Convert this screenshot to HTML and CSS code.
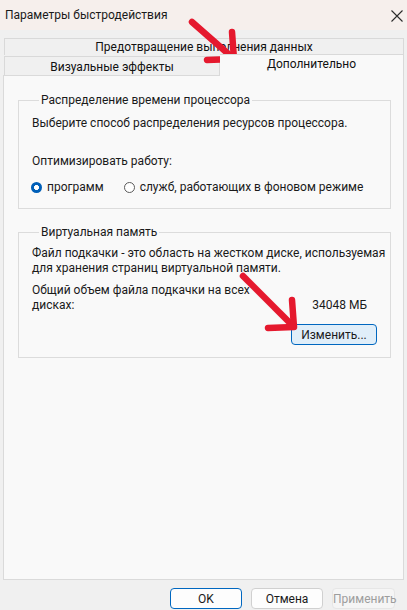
FILE: index.html
```html
<!DOCTYPE html>
<html>
  <head>
    <title>Параметры быстродействия</title>
    <link rel="stylesheet" href="styles.css">
  </head>
  <body>
    <div class="window">
      <div class="titlebar">
        <span>Параметры быстродействия</span>
        <svg class="close" width="12" height="12" viewBox="0 0 12 12">
          <path d="M0.5 0.5 L11.5 11.5 M11.5 0.5 L0.5 11.5" stroke="#2b2b2b" stroke-width="1.1" />
        </svg>
      </div>

      <div class="tabs">
        <div class="tab-row">
          <div class="tab wide">Предотвращение выполнения данных</div>
        </div>
        <div class="tab-row lower">
          <div class="tab left">Визуальные эффекты</div>
          <div class="tab active">Дополнительно</div>
        </div>
      </div>

      <div class="panel">
        <fieldset class="group cpu">
          <legend>Распределение времени процессора</legend>
          <p class="line">Выберите способ распределения ресурсов процессора.</p>
          <p class="line optimize">Оптимизировать работу:</p>
          <div class="radios">
            <label class="radio"><span class="dot checked"></span>программ</label>
            <label class="radio"><span class="dot"></span>служб, работающих в фоновом режиме</label>
          </div>
        </fieldset>

        <fieldset class="group memory">
          <legend>Виртуальная память</legend>
          <p class="line desc">Файл подкачки - это область на жестком диске, используемая для хранения страниц виртуальной памяти.</p>
          <div class="total">
            <span class="total-label">Общий объем файла подкачки на всех дисках:</span>
            <span class="total-value">34048 МБ</span>
          </div>
          <div class="change-row">
            <button class="btn change">Изменить...</button>
          </div>
        </fieldset>
      </div>

      <div class="footer">
        <button class="btn primary">OK</button>
        <button class="btn">Отмена</button>
        <button class="btn disabled">Применить</button>
      </div>

      <!-- annotation arrows -->
      <svg class="arrows" width="407" height="610" viewBox="0 0 407 610">
        <g fill="none" stroke="#e5192e" stroke-width="6.5" stroke-linecap="round" stroke-linejoin="round">
          <path d="M192 22 L233 58" />
          <path d="M232 32 L234 59 L207 60" />
          <path d="M243 276 L293 326" />
          <path d="M292 300 L294 327 L268 328" />
        </g>
      </svg>
    </div>
  </body>
</html>
```

FILE: styles.css
```css
body {
  margin: 0;
  padding: 0;
  font-family: Roboto, "Noto Sans", sans-serif;
  font-size: 12px;
  color: #1a1a1a;
}

.window {
  position: relative;
  width: 407px;
  height: 610px;
  background: #f0f0f0;
  display: flex;
  flex-direction: column;
  overflow: hidden;
}

.titlebar {
  height: 30px;
  flex: none;
  background: #f6efec;
  display: flex;
  align-items: center;
  justify-content: space-between;
  padding: 0 4px 0 5px;
}

.close {
  margin-top: 1px;
}

.tabs {
  padding: 8px 3px 0 4px;
}

.tab-row {
  display: flex;
}

.tab {
  border: 1px solid #d9d9d9;
  background: #f0f0f0;
  text-align: center;
  color: #111;
  line-height: 16px;
}

.tab.wide {
  flex: 1;
  height: 16px;
  line-height: 17px;
  border-bottom: none;
}

.tab-row.lower {
  align-items: flex-end;
}

.tab.left {
  width: 214px;
  height: 18px;
  line-height: 20px;
  border-bottom: none;
}

.tab.active {
  position: relative;
  z-index: 1;
  flex: 1;
  height: 21px;
  margin-top: -1px;
  margin-bottom: -1px;
  border-left: none;
  border-bottom: none;
  background: #f9f9f9;
  line-height: 19px;
}

.panel {
  flex: 1;
  margin: 0 3px 0 3px;
  border: 1px solid #dadada;
  background: #f9f9f9;
  padding: 16px 12px 0 14px;
}

.group {
  margin: 0;
  border: 1px solid #dcdcdc;
  padding: 0 13px 0 13px;
}

.group legend {
  padding: 0 2px;
  margin-left: 7px;
  line-height: 16px;
}

.line {
  margin: 0;
  line-height: 15px;
}

.cpu {
  padding-top: 8px;
  padding-bottom: 13px;
}

.optimize {
  margin-top: 23px;
}

.radios {
  margin-top: 11px;
  display: flex;
  gap: 20px;
  line-height: 15px;
  margin-left: -1px;
}

.radio {
  display: flex;
  align-items: center;
  gap: 5px;
}

.dot {
  width: 9px;
  height: 9px;
  border: 1px solid #5a5a5a;
  border-radius: 50%;
  background: #fff;
}

.dot.checked {
  width: 11px;
  height: 11px;
  border: none;
  background: radial-gradient(circle, #fff 0, #fff 2.2px, #005fb8 2.8px);
}

.memory {
  margin-top: 15px;
  padding-top: 6px;
  padding-bottom: 12px;
}

.desc {
  margin-right: -12px;
}

.total {
  display: flex;
  align-items: flex-end;
  margin-top: 7px;
  line-height: 15px;
}

.total-label {
  width: 222px;
}

.total-value {
  margin-left: auto;
  margin-right: 10px;
}

.change-row {
  display: flex;
  justify-content: flex-end;
  margin-top: 11px;
}

.btn {
  font-family: inherit;
  font-size: 12px;
  color: #1a1a1a;
  height: 21px;
  padding: 0;
  border: 1px solid #d0d0d0;
  border-radius: 4px;
  background: #fdfdfd;
  width: 72px;
}

.btn.change {
  width: 86px;
  border-color: #0067c0;
  background: #e0eef9;
}

.footer {
  height: 30px;
  flex: none;
  display: flex;
  justify-content: flex-end;
  gap: 9px;
  padding: 8px 12px 0 0;
  box-sizing: border-box;
}

.btn.primary {
  border-color: #0067c0;
}

.btn.disabled {
  width: 63px;
  color: #9d9d9d;
  background: #f5f5f5;
  border-color: #e6e6e6;
}

.arrows {
  position: absolute;
  top: 0;
  left: 0;
  pointer-events: none;
}
```
